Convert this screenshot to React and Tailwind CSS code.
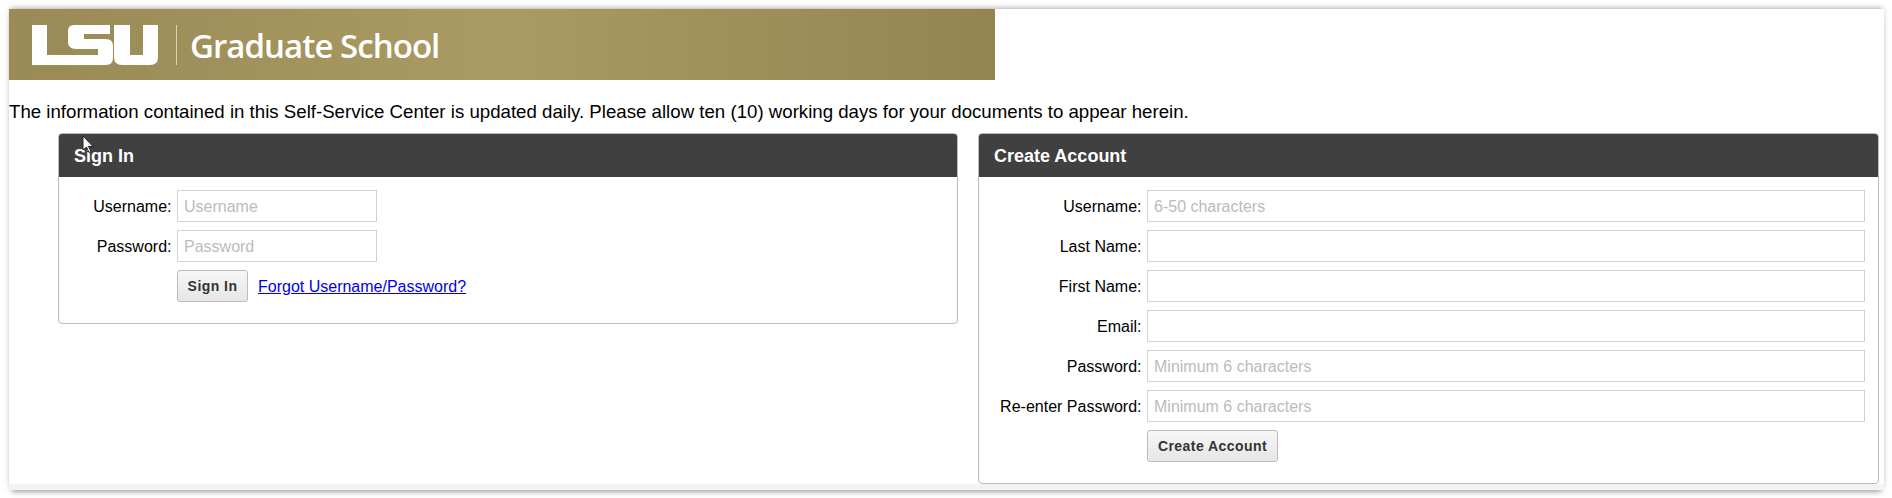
const font = "font-['Liberation_Sans',Arial,sans-serif]";

function Field({ label, placeholder, wide, labelW }) {
  return (
    <div className="flex items-center h-8">
      <label className={`${labelW} shrink-0 text-right pr-[5.5px] pt-[2px] text-base text-black`}>{label}</label>
      <input
        readOnly
        placeholder={placeholder}
        className={`${wide ? "flex-1 min-w-0" : "w-[200px]"} h-8 border border-[#d3d3d3] bg-white px-[6px] pt-[2px] text-base outline-none placeholder:text-[#bbbbbb]`}
      />
    </div>
  );
}

function Button({ children, className = "" }) {
  return (
    <button className={`h-8 rounded-[3px] border border-[#bdbdbd] bg-gradient-to-b from-[#f7f7f7] to-[#e6e6e6] text-sm font-bold tracking-[0.45px] text-[#333333] ${className}`}>
      {children}
    </button>
  );
}

function Panel({ title, children, className = "" }) {
  return (
    <section className={`rounded-[4px] border border-[#bbbbbb] bg-white overflow-hidden ${className}`}>
      <h2 className="h-[43px] bg-[#404040] pl-[15px] text-lg leading-[44px] font-bold text-white">{title}</h2>
      {children}
    </section>
  );
}

function Logo() {
  return (
    <svg width="127" height="40" viewBox="0 0 127 40" className="block" fill="#ffffff">
      <path d="M0 0H15V30H34V40H0Z" />
      <path d="M42 0H78V9H52V14H74Q81 14 81 21V33Q81 40 74 40H34V30H66V24H44Q36 24 36 17V6Q36 0 42 0Z" />
      <path d="M82 0H98V30H111V0H126V32Q126 40 118 40H90Q82 40 82 32Z" />
    </svg>
  );
}

export default function App() {
  return (
    <div className={`${font} h-[498px] w-[1892px] overflow-hidden bg-white pt-[9px] pl-[9px] text-black`}>
      <div className="w-[1875px] h-[481px] bg-[#f3f3f3] shadow-[0_0_9px_rgba(0,0,0,0.08),0_-3px_5px_-2px_rgba(0,0,0,0.28),0_5px_5px_-3px_rgba(0,0,0,0.32)]">
        <div className="h-[475px] bg-white">
          <header className="flex h-[71px] w-[986px] items-center bg-gradient-to-r from-[#998a56] via-[#aa9b64] via-50% to-[#948450] pl-[23px]">
            <Logo />
            <div className="ml-[17px] h-[40px] w-px bg-[#d9d2b4]" />
            <span className="ml-[13px] mt-[2px] font-['Open_Sans',sans-serif] text-[33px] leading-none font-semibold text-white tracking-[-0.95px]">Graduate School</span>
          </header>
          <p className="mt-[22px] h-[20px] text-[18.67px] leading-[20px] text-black">
            The information contained in this Self-Service Center is updated daily. Please allow ten (10) working days for your documents to appear herein.
          </p>
          <div className="relative mt-[11px] flex items-start gap-[20px] pl-[49px]">
            <Panel title="Sign In" className="w-[900px] h-[191px]">
              <div className="flex flex-col gap-2 pt-[13px]">
                <Field label="Username:" placeholder="Username" labelW="w-[118px]" />
                <Field label="Password:" placeholder="Password" labelW="w-[118px]" />
                <div className="flex items-center pl-[118px]">
                  <Button className="w-[71px]">Sign In</Button>
                  <a href="#" className="ml-[10px] pt-[1px] text-base text-[#0000ee] underline">Forgot Username/Password?</a>
                </div>
              </div>
            </Panel>
            <Panel title="Create Account" className="w-[901px] h-[351px]">
              <div className="flex flex-col gap-2 pt-[13px] pr-[13px]">
                <Field wide label="Username:" placeholder="6-50 characters" labelW="w-[168px]" />
                <Field wide label="Last Name:" labelW="w-[168px]" />
                <Field wide label="First Name:" labelW="w-[168px]" />
                <Field wide label="Email:" labelW="w-[168px]" />
                <Field wide label="Password:" placeholder="Minimum 6 characters" labelW="w-[168px]" />
                <Field wide label="Re-enter Password:" placeholder="Minimum 6 characters" labelW="w-[168px]" />
                <div className="pl-[168px]">
                  <Button className="w-[131px]">Create Account</Button>
                </div>
              </div>
            </Panel>
            <svg width="12" height="19" viewBox="0 0 12 19" className="absolute left-[73px] top-[2px]">
              <path d="M1 1V15L4.5 12L7 17.5L9 16.5L6.5 11.5H11Z" fill="#ffffff" stroke="#222222" strokeWidth="1" />
            </svg>
          </div>
        </div>
      </div>
    </div>
  );
}
